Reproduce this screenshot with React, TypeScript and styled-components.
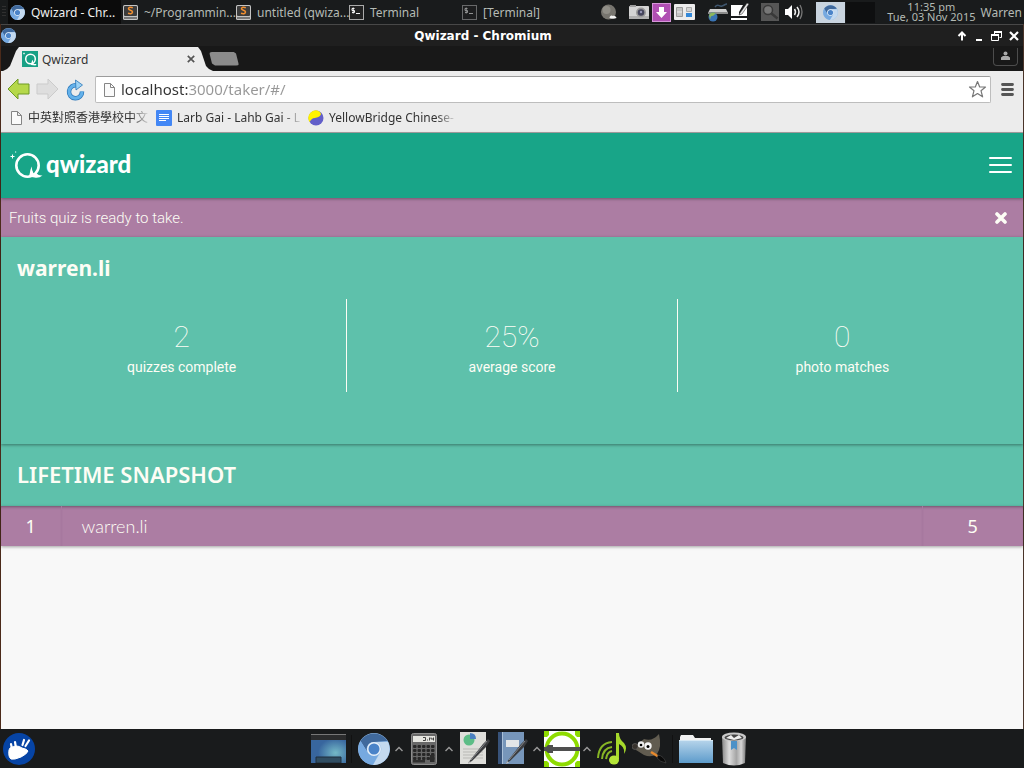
import React from "react";
import styled, { createGlobalStyle } from "styled-components";

const ui = `"Noto Sans", "Noto Sans CJK TC", sans-serif`;
const light = `Roboto, "Open Sans", sans-serif`;

const GlobalStyle = createGlobalStyle`
  *, *::before, *::after { box-sizing: border-box; }
  body { margin: 0; background: #191b1c; font-family: ${ui}; }
  h1, h2, p, dl, dd, dt { margin: 0; }
  button { border: 0; padding: 0; background: none; color: inherit; font: inherit; cursor: pointer; }
  svg { display: block; flex: none; }
`;

const Desktop = styled.div`
  min-height: 100vh;
  display: flex;
  flex-direction: column;
`;

/* ---------- top panel ---------- */

const Panel = styled.header`
  height: 24px;
  flex: none;
  display: flex;
  align-items: center;
  padding: 0 2px;
  background: #191b1c;
  color: #b4bab4;
  font-size: 12px;
  overflow: hidden;
`;

const Grip = styled.span`
  width: 4px;
  height: 12px;
  margin-right: 2px;
  background: repeating-linear-gradient(#303030 0 1px, transparent 1px 3px);
`;

const Task = styled.button<{ $active?: boolean }>`
  width: 113px;
  height: 24px;
  flex: none;
  display: flex;
  align-items: center;
  gap: 6px;
  padding: 0 4px 0 2px;
  text-align: left;
  background: ${(p) => (p.$active ? "#0b0b0b" : "transparent")};
  color: ${(p) => (p.$active ? "#f0f0f0" : "inherit")};
`;

const TaskLabel = styled.span`
  white-space: nowrap;
`;

const Tray = styled.div`
  margin-left: auto;
  display: flex;
  align-items: center;
  gap: 12px;
`;

const TrayGroup = styled.div<{ $gap?: number }>`
  display: flex;
  align-items: center;
  gap: ${(p) => p.$gap ?? 3}px;
`;

const Pager = styled.div`
  display: flex;
  gap: 1px;
`;

const Workspace = styled.button<{ $active?: boolean }>`
  width: 29px;
  height: 21px;
  display: flex;
  align-items: center;
  justify-content: center;
  background: ${(p) => (p.$active ? "#c9d4df" : "#0e0f10")};
`;

const Clock = styled.time`
  display: flex;
  flex-direction: column;
  font-size: 11px;
  line-height: 10px;
  text-align: center;
  white-space: nowrap;
`;

const UserName = styled.span`
  white-space: nowrap;
`;

/* ---------- browser window ---------- */

const Window = styled.section`
  flex: 1;
  display: flex;
  flex-direction: column;
  border: solid #4b2a1a;
  border-width: 0 1px;
  border-right-color: #4a3429;
`;

const TitleBar = styled.div`
  height: 22px;
  flex: none;
  display: grid;
  grid-template-columns: 60px 1fr 60px;
  align-items: center;
  padding-right: 4px;
  border-top: 1px solid #484848;
  background: #1f1f1f;
  color: #fff;
`;

const WindowTitle = styled.span`
  text-align: center;
  font: bold 12px/20px "DejaVu Sans", sans-serif;
  padding: 1px 54px 0 0;
`;

const WindowButtons = styled.div`
  display: flex;
  justify-content: flex-end;
  gap: 7px;
`;

const TabStrip = styled.div`
  height: 25px;
  flex: none;
  display: flex;
  align-items: flex-end;
  padding: 0 5px 0 2px;
  background: #181818;
`;

const Tab = styled.div`
  width: 210px;
  height: 24px;
  display: flex;
  align-items: center;
  gap: 4px;
  padding: 0 18px 0 19px;
  background: #ececec;
  color: #333;
  font-size: 12px;
  clip-path: polygon(
    0 100%, 4px 22px, 7px 19px, 13px 4px, 16px 0,
    calc(100% - 15px) 0, calc(100% - 12px) 4px,
    calc(100% - 7px) 19px, calc(100% - 4px) 22px, 100% 100%
  );
`;

const CloseTab = styled.button`
  margin-left: auto;
`;

const NewTab = styled.button`
  width: 30px;
  height: 14px;
  align-self: center;
  margin-left: -4px;
  background: #8b8b8b;
  border-radius: 3px;
  clip-path: polygon(0 0, 24px 0, 27px 2px, 100% 100%, 6px 100%, 3px 12px);
`;

const Profile = styled.button`
  width: 25px;
  height: 18px;
  align-self: flex-start;
  margin: 2px 0 0 auto;
  display: flex;
  justify-content: center;
  padding-top: 3px;
  border: 1px solid #4c4c4c;
  border-top: 0;
  border-radius: 0 0 4px 4px;
`;

const Toolbar = styled.div`
  height: 37px;
  flex: none;
  display: flex;
  align-items: center;
  gap: 6px;
  padding: 0 9px 0 6px;
  background: #ececec;
`;

const Omnibox = styled.div`
  height: 27px;
  flex: 1;
  display: flex;
  align-items: center;
  gap: 5px;
  margin: 0 4px;
  padding: 0 3px 0 6px;
  border: 1px solid #bdbdbd;
  border-top-color: #9c9c9c;
  border-radius: 2px;
  background: #fff;
`;

const Address = styled.input`
  flex: 1;
  min-width: 0;
  height: 24px;
  padding: 0 0 1px;
  border: 0;
  outline: 0;
  font: 15px/23px ${ui};
  color: transparent;
  background: linear-gradient(90deg, #333 67px, #979797 67px);
  background-clip: text;
  -webkit-background-clip: text;
`;

const Bookmarks = styled.nav`
  height: 25px;
  flex: none;
  display: flex;
  gap: 8px;
  padding: 0 8px 5px;
  border-bottom: 1px solid #a6a3a4;
  background: #ececec;
`;

const Bookmark = styled.a`
  display: flex;
  align-items: center;
  gap: 5px;
  color: #333;
  font-size: 12px;
  line-height: 20px;
  text-decoration: none;
`;

const BookmarkLabel = styled.span`
  white-space: nowrap;
  mask-image: linear-gradient(90deg, #000 86%, rgba(0, 0, 0, 0.15));
`;

/* ---------- qwizard page ---------- */

const Page = styled.main`
  flex: 1;
  background: #f8f8f8;
  color: #fdfdf5;
`;

const AppBar = styled.div`
  position: relative;
  height: 65px;
  display: flex;
  align-items: center;
  justify-content: space-between;
  padding: 0 11px 2px 8px;
  background: #18a588;
  box-shadow: 0 1px 3px rgba(0, 0, 0, 0.35);
`;

const Brand = styled.a`
  display: flex;
  align-items: center;
  gap: 2px;
  color: #fff;
  text-decoration: none;
`;

const Wordmark = styled.span`
  padding-bottom: 2px;
  font: 900 24px/30px Lato, sans-serif;
`;

const Notice = styled.div`
  height: 39px;
  display: flex;
  align-items: center;
  justify-content: space-between;
  padding: 0 16px 0 8px;
  background: #ac7da3;
  font: 300 15px/24px ${light};
`;

const Profiles = styled.section`
  height: 207px;
  padding: 16px 15px 16px 16px;
  background: #5ec1ab;
  box-shadow: 0 1px 3px rgba(0, 0, 0, 0.4);
  position: relative;
`;

const Heading = styled.h1`
  font: 700 21px/30px ${ui};
`;

const Stats = styled.dl`
  display: grid;
  grid-template-columns: repeat(3, 1fr);
  margin-top: 16px;
`;

const Stat = styled.div`
  height: 93px;
  display: flex;
  flex-direction: column-reverse;
  justify-content: center;
  text-align: center;
  padding-top: 4px;
  border-right: 1px solid #fdfdf5;
  &:last-child { border-right-color: transparent; }
`;

const StatLabel = styled.dt`
  padding-bottom: 2px;
  font: 400 14px/20px ${light};
`;

const StatValue = styled.dd`
  font: 100 30px/40px ${light};
`;

const SnapshotTitle = styled.h2`
  height: 62px;
  padding: 0 16px;
  background: #5ec1ab;
  font: 600 22px/60px ${ui};
`;

const Ranking = styled.table`
  width: 100%;
  border-collapse: collapse;
  background: #ac7da3;
  box-shadow: 0 1px 3px rgba(0, 0, 0, 0.35);
`;

const Rank = styled.td`
  width: 60px;
  height: 40px;
  padding: 0;
  border-right: 1px solid #a7789f;
  text-align: center;
  font: 400 18px/38px ${ui};
  box-shadow: inset 0 3px 3px -2px rgba(0, 0, 0, 0.35);
`;

const Player = styled.td`
  padding: 0 20px;
  font: 300 18px/40px Lato, sans-serif;
  box-shadow: inset 0 3px 3px -2px rgba(0, 0, 0, 0.35);
`;

const Score = styled(Rank)`
  width: 101px;
  border-right: 0;
  border-left: 1px solid #a7789f;
`;

/* ---------- dock ---------- */

const Dock = styled.footer`
  height: 39px;
  flex: none;
  display: flex;
  align-items: center;
  background: #191b1c;
`;

const StartButton = styled.button`
  width: 38px;
  padding-left: 3px;
`;

const Launchers = styled.div`
  flex: 1;
  display: flex;
  align-items: center;
  justify-content: center;
`;

const Launcher = styled.button<{ $w?: number }>`
  width: ${(p) => p.$w ?? 38}px;
  height: 39px;
  display: flex;
  align-items: center;
  justify-content: center;
`;

const Separator = styled.span`
  width: 9px;
  height: 28px;
  background: linear-gradient(#111, #111) center / 1px 100% no-repeat;
`;

/* ---------- icons ---------- */

const Chromium = ({ size }: { size: number }) => (
  <svg width={size} height={size} viewBox="0 0 32 32" aria-hidden="true">
    <circle cx="16" cy="16" r="16" fill="#8fb9e6" />
    <path d="M2.500 8A16 16 0 0 1 29.500 8L16 9A7 7 0 0 0 10 20Z" fill="#40699c" />
    <path d="M2.500 8A16 16 0 0 0 15 32L21 20A7 7 0 0 1 10 20Z" fill="#76a9e0" />
    <path d="M16 9H30A16 16 0 0 1 15 32L22 20A7 7 0 0 0 16 9Z" fill="#c3d9ef" />
    <circle cx="16" cy="16" r="7" fill="#e6eff8" />
    <circle cx="16" cy="16" r="5.500" fill="#4a83c8" />
  </svg>
);

const Sublime = () => (
  <svg width="15" height="15" viewBox="0 0 15 15" aria-hidden="true">
    <rect width="15" height="15" rx="1.500" fill="#c4c4c4" />
    <rect x="1" y="1" width="13" height="10" rx="1" fill="#3c3c3c" />
    <rect x="1" y="12" width="13" height="2" fill="#777" />
    <path d="M9.800 2.700C8 2 5.500 2 5.500 3.800S9.500 5 9.500 7 7 9 5 8.300" fill="none" stroke="#f39030" strokeWidth="1.500" />
  </svg>
);

const TerminalIcon = ({ dim }: { dim?: boolean }) => (
  <svg width="15" height="15" viewBox="0 0 15 15" opacity={dim ? 0.55 : 1} aria-hidden="true">
    <rect x=".5" y=".5" width="14" height="14" fill="#222" stroke="#aaa" />
    <path d="M5.500 3.500H3v2h2.500v2H3M4.200 2.500v6M7 8.500h4" fill="none" stroke="#f4f4f4" />
  </svg>
);

const Moon = () => (
  <svg width="16" height="16" viewBox="0 0 16 16" aria-hidden="true">
    <circle cx="7.500" cy="8" r="7.500" fill="#77756f" />
    <circle cx="5.500" cy="6" r="4" fill="#918f88" />
    <path d="M8.500 14c0-2 2-3 3-2 2-1 4 1 4 2-2 1-5 1-7 0z" fill="#f3f3f3" />
  </svg>
);

const Camera = () => (
  <svg width="20" height="15" viewBox="0 0 20 15" aria-hidden="true">
    <rect y="1" width="20" height="13" rx="1" fill="#d4d4d4" />
    <path d="M1 0h6v2H1z" fill="#9d9d9d" />
    <rect y="11" width="20" height="3" fill="#b0b0b0" />
    <circle cx="12" cy="7.500" r="5" fill="#9b9b9b" />
    <circle cx="12" cy="7.500" r="3.300" fill="#45455c" />
    <circle cx="12" cy="7" r="1.200" fill="#9898b8" />
  </svg>
);

const Download = () => (
  <svg width="19" height="19" viewBox="0 0 19 19" aria-hidden="true">
    <rect x=".5" y=".5" width="18" height="18" fill="#b04fb3" stroke="#d596d8" />
    <path d="M7 4h5v5h3l-5.500 6L4 9h3z" fill="#fff" />
  </svg>
);

const Switcher = () => (
  <svg width="21" height="16" viewBox="0 0 21 16" aria-hidden="true">
    <rect width="21" height="16" rx="1" fill="#ececec" />
    <path d="M2.500 3.500h6v9h-6z" fill="#c5c5c5" stroke="#999" />
    <path d="M3 8h5" stroke="#eee" />
    <path d="M12.500 3.500h5v4h-5z" fill="#d5d5d5" stroke="#aaa" />
    <path d="M12 9h6v4h-6z" fill="#3388d8" />
  </svg>
);

const Network = () => (
  <svg width="21" height="19" viewBox="0 0 21 19" aria-hidden="true">
    <path d="M8 4c3-4 4 0 7-1s3-2 5-2" fill="none" stroke="#3f566e" strokeWidth="1.500" />
    <path d="M3 6h16l2 4H1z" fill="#d0d0d0" />
    <path d="M1 9h20v2H1z" fill="#8c8c8c" />
    <circle cx="6" cy="14" r="4.500" fill="#3a74b4" />
    <path d="M2 12c2-3 5-3 7-1-2 0-2 2-4 2s-1 3-2 3z" fill="#8cb65c" />
  </svg>
);

const Note = () => (
  <svg width="18" height="18" viewBox="0 0 18 18" aria-hidden="true">
    <path d="M0 2h12l-4 7v3l3-2 5-8v11H0zM0 15h16v2H0z" fill="#fff" />
    <path d="M9 10l7-10 2 1-7 10-3 1z" fill="#e7e7e7" stroke="#222" strokeWidth=".5" />
  </svg>
);

const Finder = () => (
  <svg width="18" height="18" viewBox="0 0 18 18" aria-hidden="true">
    <rect width="18" height="18" fill="#565656" />
    <circle cx="7" cy="7" r="4.500" fill="#777" stroke="#393939" strokeWidth="1.500" />
    <path d="M10.500 10.500l6 5" stroke="#393939" strokeWidth="2.500" />
  </svg>
);

const Speaker = () => (
  <svg width="20" height="16" viewBox="0 0 20 16" aria-hidden="true">
    <path d="M1 5h3l4-4v14l-4-4H1z" fill="#fff" />
    <path d="M10.500 5q2 3 0 6M13 3q4 5 0 10" fill="none" stroke="#eee" strokeWidth="1.500" />
    <path d="M16 1q4 7 0 14" fill="none" stroke="#777" strokeWidth="1.300" />
  </svg>
);

const PageIcon = () => (
  <svg width="14" height="16" viewBox="0 0 14 16" aria-hidden="true">
    <path d="M2.500 1.500h6l4 4v9h-10zM8.500 1.500v4h4" fill="#fafafa" stroke="#858585" />
  </svg>
);

const DocsIcon = () => (
  <svg width="16" height="16" viewBox="0 0 16 16" aria-hidden="true">
    <rect width="16" height="16" rx="1" fill="#4387f5" />
    <path d="M3 4.500h10M3 6.500h10M3 8.500h10M3 10.500h7" stroke="#fff" />
  </svg>
);

const YellowBridge = () => (
  <svg width="16" height="16" viewBox="0 0 16 16" aria-hidden="true">
    <circle cx="8" cy="8" r="7.500" fill="#625fc9" />
    <path d="M1.500 12A7.500 7.500 0 0 1 11 1.200C16 5 10 8 7 8S3 10 1.500 12z" fill="#fff200" />
  </svg>
);

const NavArrow = ({ forward }: { forward?: boolean }) => (
  <svg width="23" height="23" viewBox="0 0 23 23" aria-hidden="true">
    <path
      d={forward ? "M22 11L12 1v5H1v10h11v5z" : "M1 11L11 1v5h11v10H11v5z"}
      fill={forward ? "#dedede" : "#b5d84a"}
      stroke={forward ? "#cbcbcb" : "#6f9a25"}
      strokeLinejoin="round"
    />
  </svg>
);

const ReloadIcon = () => (
  <svg width="20" height="22" viewBox="0 0 20 22" aria-hidden="true">
    <path d="M12 6.500A6.500 6.500 0 1 0 17 12.500" fill="none" stroke="#2b76b8" strokeWidth="4.500" />
    <path d="M12 6.500A6.500 6.500 0 1 0 17 12.500" fill="none" stroke="#63b1ea" strokeWidth="3" />
    <path d="M10.500 1L17.500 6l-6.500 5z" fill="#9bd2f5" stroke="#2b76b8" strokeWidth=".8" />
  </svg>
);

const QwizardMark = () => (
  <svg width="35" height="32" viewBox="0 0 35 32" aria-hidden="true">
    <circle cx="18.500" cy="16.500" r="11.200" fill="none" stroke="#fff" strokeWidth="2.600" />
    <path d="M19.500 27.500C21.500 25 20.500 21 23 17.500C22.500 21 24 22 24.500 24.500L27 24Q30 27 33.500 26.500Q30 29.500 25.500 28.600Z" fill="#fff" />
    <path d="M3.500 5.500v4M1.500 7.500h4M6 3h1.200" stroke="#fff" strokeWidth="1" />
  </svg>
);

const Hand = () => (
  <svg width="32" height="32" viewBox="0 0 32 32" aria-hidden="true">
    <circle cx="16" cy="16" r="16" fill="#0644a5" />
    <path d="M7 15Q14 11 19 15 24 16 25 18 24 21 18 24 11 27 8 26 5 24 6 17z" fill="#fff" stroke="#fff" strokeLinejoin="round" />
    <path d="M9 16L8 11M13 15L12 9M19.500 12L21 7M22.500 13L26 7.500" stroke="#fff" strokeWidth="2.200" strokeLinecap="round" />
  </svg>
);

const Caret = () => (
  <svg width="8" height="6" viewBox="0 0 8 6" aria-hidden="true">
    <path d="M.5 5L4 1.500 7.500 5" fill="none" stroke="#9a9a9a" strokeWidth="1.400" />
  </svg>
);

const Monitor = () => (
  <svg width="35" height="29" viewBox="0 0 35 29" aria-hidden="true">
    <defs>
      <radialGradient id="screen" cx=".7" cy=".65">
        <stop offset="0" stopColor="#74b9c7" />
        <stop offset="1" stopColor="#38669e" />
      </radialGradient>
    </defs>
    <rect width="35" height="29" fill="url(#screen)" />
    <path d="M0 0h35v6H0z" fill="#2b2c2d" />
    <path d="M0 .5h35" stroke="#777" />
    <path d="M5 29v-6h25v6z" fill="#304d61" stroke="#1f2f3e" />
  </svg>
);

const Calculator = () => (
  <svg width="26" height="32" viewBox="0 0 26 32" aria-hidden="true">
    <rect x=".5" y=".5" width="25" height="31" rx="2" fill="#686868" stroke="#8d8d8d" />
    <rect x="2" y="3" width="22" height="6" fill="#e5e5e0" />
    <path d="M12 4.500h2.500v3H12M16 7h1M18.500 4.500v3M20 4.500v1.500h2.500M22.500 4.500v3" fill="none" stroke="#333" strokeWidth=".9" />
    {[12, 16, 20, 24].map((y) =>
      [2, 6.5, 11, 15.5, 20].map((x) => <rect key={`${x}-${y}`} x={x} y={y} width="3.500" height="3" rx="1" fill="#272727" />)
    )}
    <rect x="2" y="27" width="12" height="2.500" fill="#303030" />
    <rect x="19" y="22" width="4.500" height="7" fill="#2b2b2b" />
  </svg>
);

const Pen = () => (
  <>
    <path d="M9 31L24 12l5-5 2 2-4 6-14 14z" fill="#3b3c3f" />
    <path d="M12 28L28 9" stroke="#85878a" />
    <path d="M9 32l1-3 2 1.500z" fill="#bbb" />
  </>
);

const Report = () => (
  <svg width="32" height="33" viewBox="0 0 32 33" aria-hidden="true">
    <path d="M1 0h26v32H1z" fill="#dededa" />
    <path d="M4 17h20M4 20h20M4 23h20M4 26h20" stroke="#b9b9b5" />
    <circle cx="10" cy="8" r="5.500" fill="#5cbd86" />
    <path d="M11 7V1q6 0 6 6z" fill="#4a80c0" />
    <Pen />
  </svg>
);

const Notebook = () => (
  <svg width="32" height="33" viewBox="0 0 32 33" aria-hidden="true">
    <path d="M1 0h26v32H1z" fill="#7796ba" />
    <path d="M1 0h4v32H1z" fill="#38537a" />
    <path d="M5.500 0v32" stroke="#aac0d8" />
    <path d="M9 8h13v7H9z" fill="#e3e6e8" />
    <Pen />
  </svg>
);

const Ring = () => (
  <svg width="36" height="36" viewBox="0 0 36 36" aria-hidden="true">
    <path d="M0 0h36v36H0z" fill="#fff" />
    <path d="M0 0h5v4l-2 2H0zM36 0h-5v4l2 2h3zM0 36h5v-4l-2-2H0zM36 36h-5v-4l2-2h3z" fill="#8edb00" />
    <circle cx="18" cy="18" r="15.500" fill="#fff" stroke="#8edb00" strokeWidth="4" />
    <path d="M0 16h2l2-2h5v2h27v4H9v2H4l-2-2H0z" fill="#4f4f4f" />
  </svg>
);

const Music = () => (
  <svg width="30" height="32" viewBox="0 0 30 32" aria-hidden="true">
    <path d="M19 26V0h3q0 6 5 10 4 5 0 11 1-7-5-10v15z" fill="#a6d92b" />
    <ellipse cx="17" cy="27" rx="5" ry="4.500" fill="#b4e538" />
    <path d="M1 25Q2 10 15 9M5 26q1-11 10-12M9 26q1-7 6-8" fill="none" stroke="#87b625" strokeWidth="2" />
  </svg>
);

const Gimp = () => (
  <svg width="36" height="30" viewBox="0 0 36 30" aria-hidden="true">
    <path d="M12 5q8 3 15-5 3 13-2 20-6 4-13 1L4 16q2-7 8-11z" fill="#615c50" />
    <circle cx="3" cy="12.500" r="3" fill="#38332e" stroke="#777" strokeWidth=".5" />
    <circle cx="9" cy="10.500" r="3.200" fill="#eee" />
    <circle cx="16" cy="12" r="3.700" fill="#f4f4f4" />
    <circle cx="9" cy="11" r="1.300" />
    <circle cx="16" cy="12.500" r="1.500" />
    <path d="M19 18l8 5" stroke="#e88a2d" strokeWidth="2.500" />
    <path d="M26 21q6 1 8 8-6-1-9-5z" fill="#0a0a0a" stroke="#555" strokeWidth=".5" />
  </svg>
);

const Folder = () => (
  <svg width="34" height="28" viewBox="0 0 34 28" aria-hidden="true">
    <defs>
      <linearGradient id="folder" x2="0" y2="1">
        <stop stopColor="#b7d5eb" />
        <stop offset="1" stopColor="#5d9bcb" />
      </linearGradient>
    </defs>
    <path d="M1 5V2l1-2h12l2 3h16v4H1z" fill="#f1f1f1" />
    <path d="M0 5h34v23H0z" fill="url(#folder)" />
    <path d="M0 5.500h34" stroke="#d6e8f4" />
  </svg>
);

const Trash = () => (
  <svg width="24" height="34" viewBox="0 0 24 34" aria-hidden="true">
    <defs>
      <linearGradient id="can">
        <stop stopColor="#888" />
        <stop offset=".3" stopColor="#ddd" />
        <stop offset=".6" stopColor="#a5a5a5" />
        <stop offset=".8" stopColor="#d5d5d5" />
        <stop offset="1" stopColor="#777" />
      </linearGradient>
    </defs>
    <path d="M0 5l1 26q11 5 22 0l1-26z" fill="url(#can)" />
    <ellipse cx="12" cy="5" rx="12" ry="4.500" fill="#c9c9c9" />
    <ellipse cx="12" cy="5.500" rx="9.500" ry="3" fill="#454545" />
    <path d="M4 6l5-3 3 3 5-3 3 3-8 2z" fill="#eee" />
    <path d="M9 9h6v9l-3-2-3 2z" fill="#4c91c7" />
  </svg>
);

/* ---------- composition ---------- */

export default function App() {
  return (
    <Desktop>
      <GlobalStyle />
      <Panel>
        <Grip />
        <Task $active>
          <Chromium size={15} />
          <TaskLabel>Qwizard - Chr...</TaskLabel>
        </Task>
        <Task>
          <Sublime />
          <TaskLabel>~/Programmin...</TaskLabel>
        </Task>
        <Task>
          <Sublime />
          <TaskLabel>untitled (qwiza...</TaskLabel>
        </Task>
        <Task>
          <TerminalIcon />
          <TaskLabel>Terminal</TaskLabel>
        </Task>
        <Task>
          <TerminalIcon dim />
          <TaskLabel>[Terminal]</TaskLabel>
        </Task>
        <Tray>
          <Moon />
          <TrayGroup>
            <Camera />
            <Download />
            <Switcher />
          </TrayGroup>
          <TrayGroup>
            <Network />
            <Note />
          </TrayGroup>
          <TrayGroup $gap={5}>
            <Finder />
            <Speaker />
          </TrayGroup>
          <Pager>
            <Workspace $active aria-label="Workspace 1">
              <Chromium size={15} />
            </Workspace>
            <Workspace aria-label="Workspace 2" />
          </Pager>
          <TrayGroup $gap={5}>
            <Clock>
              <span>11:35 pm</span>
              <span>Tue, 03 Nov 2015</span>
            </Clock>
            <UserName>Warren</UserName>
          </TrayGroup>
        </Tray>
      </Panel>

      <Window>
        <TitleBar>
          <Chromium size={15} />
          <WindowTitle>Qwizard - Chromium</WindowTitle>
          <WindowButtons>
            <button aria-label="Keep above">
              <svg width="10" height="10" viewBox="0 0 10 10">
                <path d="M5 9.500V2M1.500 5L5 1.500 8.500 5" fill="none" stroke="#fff" strokeWidth="2" />
              </svg>
            </button>
            <button aria-label="Minimize">
              <svg width="10" height="10" viewBox="0 0 10 10">
                <path d="M2 9h6" stroke="#fff" strokeWidth="2" />
              </svg>
            </button>
            <button aria-label="Restore">
              <svg width="11" height="10" viewBox="0 0 11 10">
                <path d="M3.500 3V1h7v5.500h-2M.5 4h7v5.500h-7z" fill="none" stroke="#fff" />
                <path d="M3 1h8M0 4h8" stroke="#fff" strokeWidth="2" />
              </svg>
            </button>
            <button aria-label="Close">
              <svg width="10" height="10" viewBox="0 0 10 10">
                <path d="M1 1l8 8M9 1L1 9" stroke="#fff" strokeWidth="2.200" />
              </svg>
            </button>
          </WindowButtons>
        </TitleBar>

        <TabStrip>
          <Tab>
            <svg width="16" height="16" viewBox="0 0 16 16" aria-hidden="true">
              <rect width="16" height="16" fill="#18a085" />
              <circle cx="8.500" cy="8" r="4.800" fill="none" stroke="#fff" strokeWidth="1.500" />
              <path d="M9 14q1-5 1.500-5t1 4h3l-1 1.500z" fill="#fff" />
              <path d="M1 2.500h2M2 1.500v2" stroke="#fff" strokeWidth=".6" />
            </svg>
            Qwizard
            <CloseTab aria-label="Close tab">
              <svg width="8" height="8" viewBox="0 0 8 8">
                <path d="M.8.8l6.400 6.400M7.200.8L.8 7.200" stroke="#555" strokeWidth="1.700" />
              </svg>
            </CloseTab>
          </Tab>
          <NewTab aria-label="New tab" />
          <Profile aria-label="Profile">
            <svg width="9" height="9" viewBox="0 0 9 9">
              <circle cx="4.500" cy="2.500" r="2" fill="#aaa" />
              <path d="M0 9V6.500l2-1.500h5l2 1.500V9z" fill="#aaa" />
            </svg>
          </Profile>
        </TabStrip>

        <Toolbar>
          <button aria-label="Back">
            <NavArrow />
          </button>
          <button aria-label="Forward">
            <NavArrow forward />
          </button>
          <button aria-label="Reload">
            <ReloadIcon />
          </button>
          <Omnibox>
            <PageIcon />
            <Address aria-label="Address" defaultValue="localhost:3000/taker/#/" />
            <button aria-label="Bookmark this page">
              <svg width="19" height="19" viewBox="0 0 19 19">
                <path d="M9.500 1.500L11.700 7H17.500L13 10.700 14.600 16.800 9.500 13.500 4.400 16.800 6 10.700 1.500 7H7.300Z" fill="#fff" stroke="#777" strokeWidth="1.200" strokeLinejoin="round" />
              </svg>
            </button>
          </Omnibox>
          <button aria-label="Menu">
            <svg width="13" height="13" viewBox="0 0 13 13">
              <path d="M1.500 1.500h10M1.500 6.500h10M1.500 11.500h10" stroke="#555" strokeWidth="2.800" strokeLinecap="round" />
            </svg>
          </button>
        </Toolbar>

        <Bookmarks>
          <Bookmark href="#school">
            <PageIcon />
            <BookmarkLabel>中英對照香港學校中文</BookmarkLabel>
          </Bookmark>
          <Bookmark href="#larb">
            <DocsIcon />
            <BookmarkLabel>Larb Gai - Lahb Gai - L</BookmarkLabel>
          </Bookmark>
          <Bookmark href="#yellowbridge">
            <YellowBridge />
            <BookmarkLabel>YellowBridge Chinese-</BookmarkLabel>
          </Bookmark>
        </Bookmarks>

        <Page>
          <AppBar>
            <Brand href="#/">
              <QwizardMark />
              <Wordmark>qwizard</Wordmark>
            </Brand>
            <button aria-label="Open navigation">
              <svg width="23" height="18" viewBox="0 0 23 18">
                <path d="M1 2h21M1 9h21M1 16h21" stroke="#fff" strokeWidth="2" strokeLinecap="round" />
              </svg>
            </button>
          </AppBar>
          <Notice role="status">
            Fruits quiz is ready to take.
            <button aria-label="Dismiss">
              <svg width="12" height="12" viewBox="0 0 12 12">
                <path d="M2 2l8 8M10 2l-8 8" stroke="#fdfdf5" strokeWidth="3.600" strokeLinecap="round" />
              </svg>
            </button>
          </Notice>
          <Profiles>
            <Heading>warren.li</Heading>
            <Stats>
              <Stat>
                <StatLabel>quizzes complete</StatLabel>
                <StatValue>2</StatValue>
              </Stat>
              <Stat>
                <StatLabel>average score</StatLabel>
                <StatValue>25%</StatValue>
              </Stat>
              <Stat>
                <StatLabel>photo matches</StatLabel>
                <StatValue>0</StatValue>
              </Stat>
            </Stats>
          </Profiles>
          <SnapshotTitle>LIFETIME SNAPSHOT</SnapshotTitle>
          <Ranking aria-label="Lifetime snapshot">
            <tbody>
              <tr>
                <Rank>1</Rank>
                <Player>warren.li</Player>
                <Score>5</Score>
              </tr>
            </tbody>
          </Ranking>
        </Page>
      </Window>

      <Dock>
        <StartButton aria-label="Applications">
          <Hand />
        </StartButton>
        <Launchers>
          <Launcher aria-label="Show desktop"><Monitor /></Launcher>
          <Separator />
          <Launcher $w={36} aria-label="Chromium"><Chromium size={32} /></Launcher>
          <Launcher $w={14} aria-label="Chromium windows"><Caret /></Launcher>
          <Launcher $w={36} aria-label="Calculator"><Calculator /></Launcher>
          <Launcher $w={14} aria-label="Office tools"><Caret /></Launcher>
          <Launcher aria-label="Report"><Report /></Launcher>
          <Launcher aria-label="Notebook"><Notebook /></Launcher>
          <Launcher $w={10} aria-label="More editors"><Caret /></Launcher>
          <Launcher $w={40} aria-label="Ring"><Ring /></Launcher>
          <Launcher $w={10} aria-label="More apps"><Caret /></Launcher>
          <Launcher $w={40} aria-label="Music"><Music /></Launcher>
          <Launcher $w={36} aria-label="GIMP"><Gimp /></Launcher>
          <Separator />
          <Launcher aria-label="Files"><Folder /></Launcher>
          <Launcher aria-label="Trash"><Trash /></Launcher>
        </Launchers>
      </Dock>
    </Desktop>
  );
}
